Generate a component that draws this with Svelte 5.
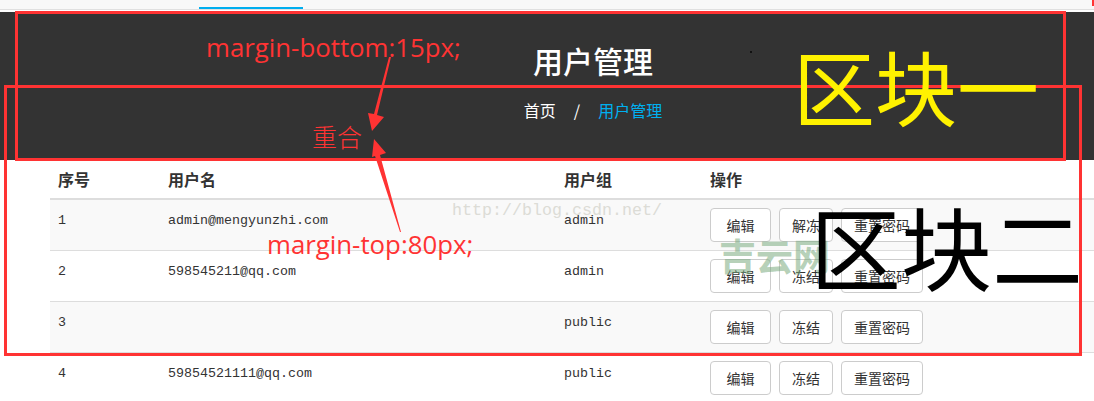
<script lang="ts">
  type User = { id: number; email: string; group: string; frozen: boolean };

  const users: User[] = [
    { id: 1, email: "admin@mengyunzhi.com", group: "admin", frozen: true },
    { id: 2, email: "598545211@qq.com", group: "admin", frozen: false },
    { id: 3, email: "", group: "public", frozen: false },
    { id: 4, email: "59854521111@qq.com", group: "public", frozen: false },
  ];
</script>

<div class="page">
  <nav class="topbar">
    <span class="tab"></span>
    <span class="corner"></span>
  </nav>

  <header class="hero">
    <h1>用户管理</h1>
    <div class="crumbs">
      <span>首页</span>
      <span class="sep">/</span>
      <span class="current">用户管理</span>
    </div>
  </header>

  <table>
    <thead>
      <tr>
        <th class="c-id">序号</th>
        <th class="c-email">用户名</th>
        <th class="c-group">用户组</th>
        <th>操作</th>
      </tr>
    </thead>
    <tbody>
      {#each users as user}
        <tr>
          <td>{user.id}</td>
          <td>{user.email}</td>
          <td>{user.group}</td>
          <td>
            <div class="actions">
              <button class="wide">编辑</button>
              <button>{user.frozen ? "解冻" : "冻结"}</button>
              <button>重置密码</button>
            </div>
          </td>
        </tr>
      {/each}
    </tbody>
  </table>

  <!-- annotations drawn on top of the screenshot -->
  <div class="mark watermark">http://blog.csdn.net/</div>
  <div class="mark site">吉云网</div>
  <div class="box box-one"></div>
  <div class="box box-two"></div>
  <div class="mark note note-bottom">margin-bottom:15px;</div>
  <div class="mark note note-top">margin-top:80px;</div>
  <div class="mark overlap">重合</div>
  <div class="mark hand hand-one">区块一</div>
  <div class="mark hand hand-two">区块二</div>

  <svg class="arrows" width="1094" height="401" viewBox="0 0 1094 401">
    <polygon points="391,57 377,115 384,117 372,131 368,113 374,114 389,57" fill="#ff3333" />
    <polygon points="374,139 386,153 380,155 401,232 400,232 375,156 372,157" fill="#ff3333" />
    <rect x="750" y="51" width="2" height="2" fill="#111" />
  </svg>
</div>

<style>
  :global(body) {
    margin: 0;
    background: #fff;
  }

  .page {
    position: relative;
    width: 1094px;
    height: 401px;
    overflow: hidden;
    font-family: "Liberation Mono", "Noto Sans CJK SC", monospace;
    color: #333;
  }

  .topbar {
    display: flex;
    justify-content: space-between;
    height: 9px;
    padding-left: 199px;
    background: #f8f8f8;
    border-bottom: 1px solid #e0e0e0;
    margin-bottom: 2px;
  }

  .tab {
    width: 104px;
    height: 2px;
    margin-top: 7px;
    background: #00aeef;
  }

  .corner {
    width: 2px;
    height: 6px;
    background: #ff3333;
  }

  .hero {
    height: 148px;
    box-sizing: border-box;
    padding: 32px 0 0 92px;
    background: #333;
    color: #fff;
    text-align: center;
    font-family: "Noto Sans CJK SC", sans-serif;
  }

  h1 {
    margin: 0;
    font-size: 30px;
    line-height: 32px;
    font-weight: 500;
  }

  .crumbs {
    display: flex;
    justify-content: center;
    gap: 18px;
    margin-top: 22px;
    font-size: 16px;
    line-height: 24px;
  }

  .current {
    color: #00b0f0;
  }

  table {
    width: 1044px;
    margin-left: 50px;
    border-collapse: collapse;
    table-layout: fixed;
    font-size: 13.33px;
  }

  th {
    height: 39px;
    padding: 0 8px;
    box-sizing: border-box;
    text-align: left;
    font-size: 16px;
    font-family: "Noto Sans CJK SC", sans-serif;
    font-weight: 700;
    border-bottom: 2px solid #ddd;
  }

  .c-id {
    width: 110px;
  }

  .c-email {
    width: 396px;
  }

  .c-group {
    width: 146px;
  }

  td {
    height: 34px;
    padding: 8px;
    vertical-align: top;
    line-height: 26px;
    border-top: 1px solid #ddd;
  }

  tbody tr:first-child td {
    border-top: 0;
  }

  tbody tr:nth-child(odd) {
    background: #f9f9f9;
  }

  .actions {
    display: flex;
    gap: 8px;
  }

  button {
    height: 34px;
    padding: 0 12px;
    border: 1px solid #ccc;
    border-radius: 4px;
    background: #fff;
    color: #333;
    font-family: "Noto Sans CJK SC", sans-serif;
    font-size: 14px;
    line-height: 20px;
  }

  .wide {
    padding: 0;
    width: 61px;
  }

  .box {
    position: absolute;
    box-sizing: border-box;
    border: 3px solid #ff3333;
  }

  .box-one {
    left: 15px;
    top: 11px;
    width: 1051px;
    height: 150px;
  }

  .box-two {
    left: 4px;
    top: 85px;
    width: 1078px;
    height: 271px;
  }

  .mark {
    position: absolute;
    white-space: nowrap;
  }

  .watermark {
    left: 452px;
    top: 201px;
    font-size: 16.67px;
    line-height: 20px;
    color: #dcdcd6;
  }

  .site {
    left: 719px;
    top: 233px;
    font-family: "Noto Sans CJK SC", sans-serif;
    font-size: 37px;
    line-height: 44px;
    font-weight: 700;
    color: rgba(120, 170, 125, 0.55);
  }

  .note {
    font-family: "Open Sans", sans-serif;
    color: #ff3333;
    line-height: 32px;
  }

  .note-bottom {
    left: 206px;
    top: 31px;
    font-size: 25.8px;
  }

  .note-top {
    left: 267px;
    top: 228px;
    font-size: 25.8px;
  }

  .overlap {
    left: 312px;
    top: 121px;
    font-family: "Noto Sans CJK SC", sans-serif;
    font-size: 25px;
    line-height: 30px;
    font-weight: 300;
    color: #ff3333;
  }

  .hand {
    font-family: "Noto Sans CJK SC", sans-serif;
  }

  .hand-one {
    left: 793px;
    top: 37px;
    font-size: 82px;
    line-height: 96px;
    color: #fff200;
  }

  .hand-two {
    left: 810px;
    top: 191px;
    font-size: 91px;
    line-height: 106px;
    color: #000;
  }

  .arrows {
    position: absolute;
    left: 0;
    top: 0;
  }
</style>
